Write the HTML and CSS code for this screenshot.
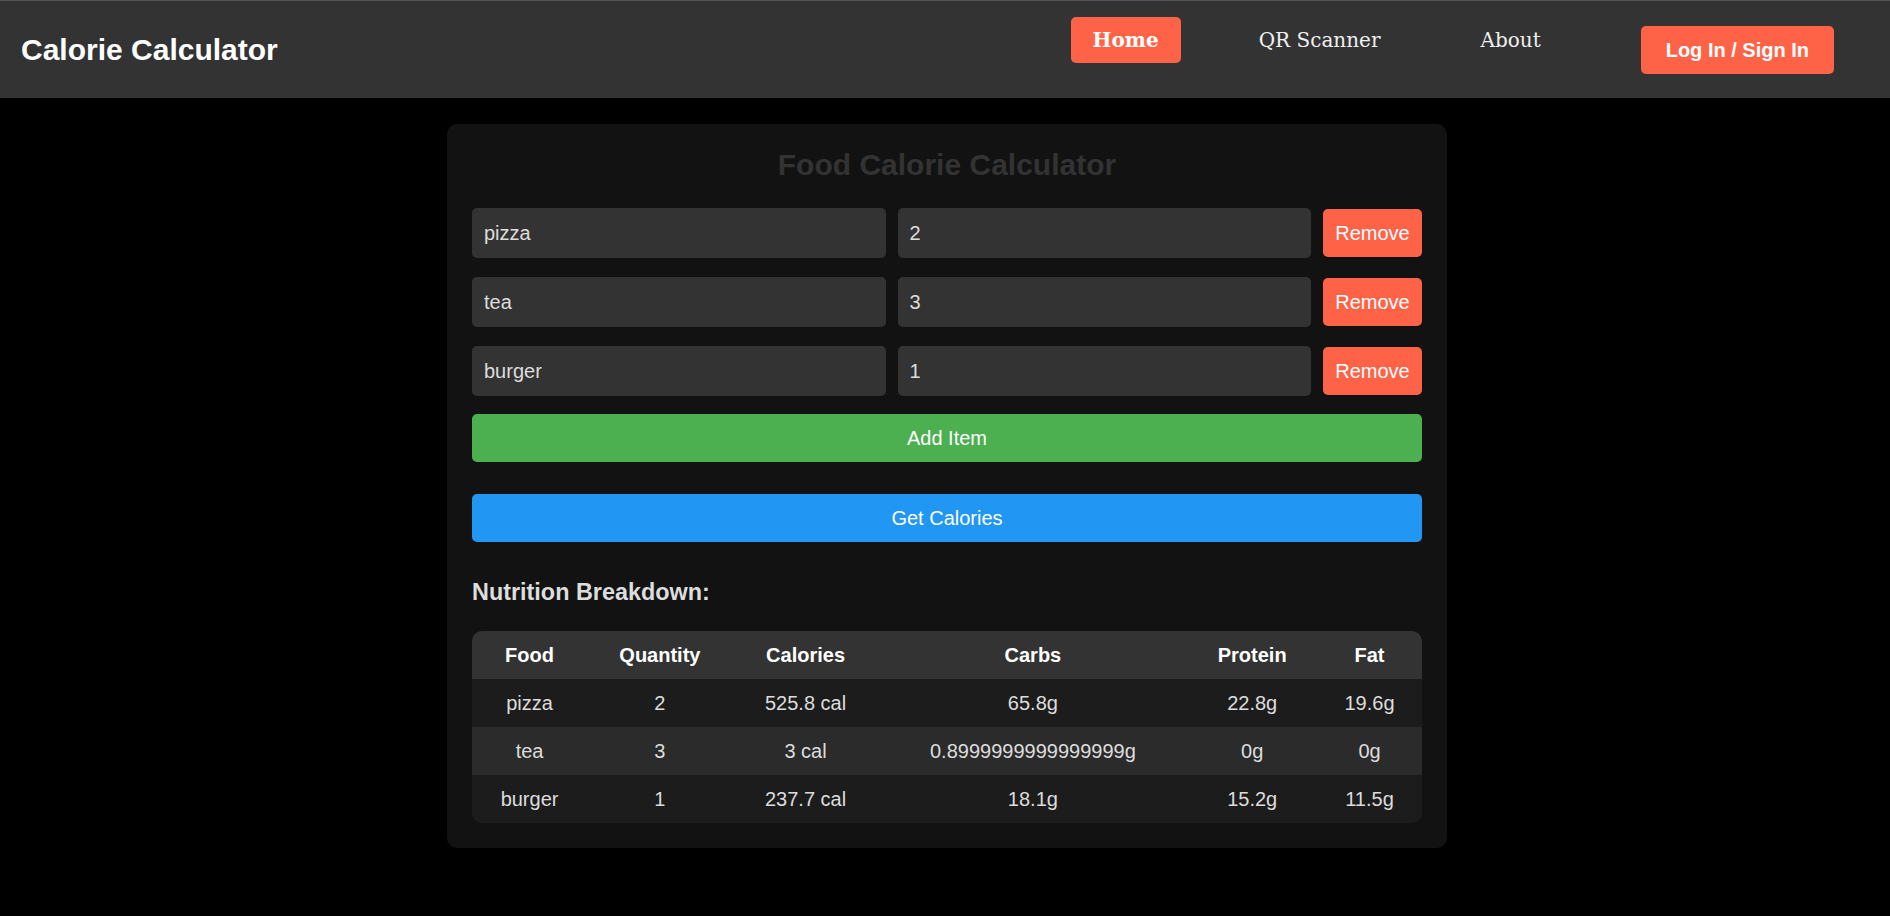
FILE: index.html
```html
<!DOCTYPE html>
<html lang="en">
<head>
<meta charset="utf-8">
<title>Calorie Calculator</title>
<link rel="stylesheet" href="styles.css">
</head>
<body>
<header class="site-header">
  <div class="brand">Calorie Calculator</div>
  <nav class="site-nav">
    <ul class="nav-links">
      <li><a class="nav-link active" href="#">Home</a></li>
      <li><a class="nav-link" href="#">QR Scanner</a></li>
      <li><a class="nav-link" href="#">About</a></li>
    </ul>
    <button class="login-btn" type="button">Log In / Sign In</button>
  </nav>
</header>

<main class="page">
  <section class="card">
    <h2 class="card-title">Food Calorie Calculator</h2>

    <div class="item-list">
      <div class="item-row">
        <input class="field" type="text" value="pizza">
        <input class="field" type="text" value="2">
        <button class="btn btn-remove" type="button">Remove</button>
      </div>
      <div class="item-row">
        <input class="field" type="text" value="tea">
        <input class="field" type="text" value="3">
        <button class="btn btn-remove" type="button">Remove</button>
      </div>
      <div class="item-row">
        <input class="field" type="text" value="burger">
        <input class="field" type="text" value="1">
        <button class="btn btn-remove" type="button">Remove</button>
      </div>
    </div>

    <button class="btn btn-block btn-add" type="button">Add Item</button>
    <button class="btn btn-block btn-calc" type="button">Get Calories</button>

    <h3 class="section-title">Nutrition Breakdown:</h3>

    <table class="nutrition">
      <thead>
        <tr><th>Food</th><th>Quantity</th><th>Calories</th><th>Carbs</th><th>Protein</th><th>Fat</th></tr>
      </thead>
      <tbody>
        <tr><td>pizza</td><td>2</td><td>525.8 cal</td><td>65.8g</td><td>22.8g</td><td>19.6g</td></tr>
        <tr><td>tea</td><td>3</td><td>3 cal</td><td>0.8999999999999999g</td><td>0g</td><td>0g</td></tr>
        <tr><td>burger</td><td>1</td><td>237.7 cal</td><td>18.1g</td><td>15.2g</td><td>11.5g</td></tr>
      </tbody>
    </table>
  </section>
</main>
</body>
</html>
```

FILE: styles.css
```css
* { box-sizing: border-box; }

html, body {
  margin: 0;
  padding: 0;
  background: #000;
  font-family: "Liberation Sans", Arial, sans-serif;
  font-size: 20px;
  color: #ddd;
}

.site-header {
  height: 98px;
  background: #333;
  border-top: 1px solid #555;
  display: flex;
  align-items: center;
  justify-content: space-between;
  padding: 0 56px 0 21px;
}

.brand {
  font-size: 30px;
  font-weight: bold;
  color: #fff;
  line-height: 36px;
}

.site-nav {
  display: flex;
  align-items: center;
  gap: 78px;
}

.nav-links {
  display: flex;
  gap: 56px;
  list-style: none;
  margin: 0 0 20px 0;
  padding: 0;
}

.nav-link {
  display: block;
  padding: 11px 22px;
  font-family: "DejaVu Serif", Georgia, serif;
  font-size: 20px;
  line-height: 24px;
  color: #f0f0f0;
  text-decoration: none;
  border-radius: 5px;
}

.nav-link.active {
  background: #ff6347;
  color: #fff;
  font-weight: bold;
}

.login-btn {
  border: none;
  background: #ff6347;
  color: #fff;
  font-family: "Liberation Sans", Arial, sans-serif;
  font-size: 20px;
  font-weight: bold;
  line-height: 24px;
  padding: 12px 25px;
  border-radius: 5px;
}

.page {
  padding: 26px 0 0 4px;
}

.card {
  width: 1000px;
  margin: 0 auto;
  background: #121212;
  border-radius: 10px;
  padding: 23px 25px 25px;
}

.card-title {
  margin: 0 0 25px;
  text-align: center;
  font-size: 30px;
  line-height: 36px;
  font-weight: bold;
  color: #333;
}

.item-list {
  display: flex;
  flex-direction: column;
  gap: 19px;
}

.item-row {
  display: flex;
  align-items: center;
  gap: 12px;
}

.field {
  flex: 1;
  min-width: 0;
  height: 50px;
  padding: 13px 12px;
  border: none;
  border-radius: 5px;
  background: #333;
  color: #ddd;
  font-family: "Liberation Sans", Arial, sans-serif;
  font-size: 20px;
  line-height: 24px;
  outline: none;
}

.btn {
  border: none;
  border-radius: 5px;
  color: #fff;
  font-family: "Liberation Sans", Arial, sans-serif;
  font-size: 20px;
  line-height: 24px;
  padding: 12px;
}

.btn-remove {
  background: #ff6347;
  width: 99px;
  flex: none;
}

.btn-block {
  display: block;
  width: 100%;
}

.btn-add {
  background: #4caf50;
  margin-top: 18px;
}

.btn-calc {
  background: #2196f3;
  margin-top: 32px;
}

.section-title {
  margin: 36px 0 25px;
  font-size: 23.4px;
  line-height: 28px;
  font-weight: bold;
  color: #ddd;
}

.nutrition {
  width: 100%;
  border-collapse: separate;
  border-spacing: 0;
  border-radius: 10px;
  overflow: hidden;
}

.nutrition th,
.nutrition td {
  padding: 12px 15px;
  line-height: 24px;
  text-align: center;
  font-size: 20px;
}

.nutrition th {
  background: #333;
  color: #fff;
  font-weight: bold;
}

.nutrition tbody tr:nth-child(odd) td { background: #1c1c1c; }
.nutrition tbody tr:nth-child(even) td { background: #2b2b2b; }
.nutrition td { color: #ddd; }
```
